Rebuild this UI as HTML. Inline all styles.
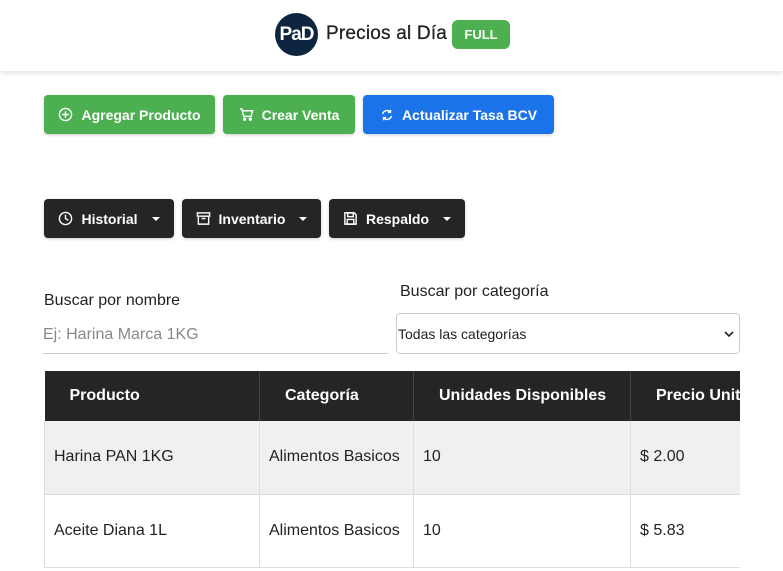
<!DOCTYPE html>
<html><head><meta charset="utf-8"><style>
*{box-sizing:border-box;margin:0;padding:0}
body{width:783px;height:563px;overflow:hidden;background:#fff;font-family:"Liberation Sans",sans-serif;position:relative;color:#222}
.hdr{position:absolute;left:0;top:0;width:783px;height:71px;background:#fff;box-shadow:0 2px 6px rgba(0,0,0,.12)}
.logo{position:absolute;left:275px;top:13px;width:43px;height:43px;border-radius:50%;background:#0e2540;color:#fff;font-weight:bold;font-size:19px;line-height:43px;text-align:center;letter-spacing:-1px}
.title{position:absolute;left:326px;top:23px;font-size:19px;color:#222;letter-spacing:.2px;-webkit-text-stroke:.3px #222}
.full{position:absolute;left:452px;top:20px;width:58px;height:29px;border-radius:6px;background:#4caf50;color:#fff;font-weight:bold;font-size:13px;line-height:29px;text-align:center}
.btn{position:absolute;height:39px;border-radius:4px;color:#fff;font-weight:bold;font-size:14px;display:flex;align-items:center;justify-content:center;gap:8px;box-shadow:0 1px 3px rgba(0,0,0,.2)}
.g{background:#4caf50}.b{background:#1a73e8}.d{background:#252525}
.caret{width:0;height:0;border-left:4px solid transparent;border-right:4px solid transparent;border-top:4px solid #fff;margin-left:6px}
.lbl{position:absolute;font-size:16px;color:#222}
.inp{position:absolute;left:43px;top:316px;width:345px;height:38px;border-bottom:1px solid #ccc;font-size:16px;color:#888;line-height:38px}
.sel{position:absolute;left:396px;top:313px;width:344px;height:41px;border:1px solid #ccc;border-radius:4px;font-size:14px;line-height:40px;padding-left:1px}
.wrap{position:absolute;left:44px;top:371px;width:696px;height:200px;overflow:hidden}
table{position:absolute;left:0;top:0;border-collapse:collapse;table-layout:fixed;width:720px}
th{background:#252525;color:#fff;height:50px;font-size:16px;text-align:left;border-right:1px solid #444}
td{height:73px;font-size:16px;border-right:1px solid #ddd;border-bottom:1px solid #ddd;padding-left:9px}
td:first-child{border-left:1px solid #ddd}
tr.r1 td{background:#f0f0f0}
</style></head><body>
<div class="hdr"><div class="logo">PaD</div><div class="title">Precios al Día</div><div class="full">FULL</div></div>
<div class="btn g" style="left:44px;top:95px;width:171px"><svg width="15" height="15" viewBox="0 0 16 16" fill="none" stroke="#fff" stroke-width="1.5"><circle cx="8" cy="8" r="6.5"/><path d="M8 4.5v7M4.5 8h7"/></svg>Agregar Producto</div>
<div class="btn g" style="left:223px;top:95px;width:132px"><svg width="15" height="15" viewBox="0 0 16 16" fill="none" stroke="#fff" stroke-width="1.5"><path d="M1 2h2l2 8h8l1.5-6H4"/><circle cx="6" cy="13" r="1"/><circle cx="12" cy="13" r="1"/></svg>Crear Venta</div>
<div class="btn b" style="left:363px;top:95px;width:191px"><svg width="14" height="14" viewBox="0 0 16 16" fill="none" stroke="#fff" stroke-width="1.6"><path d="M3 7a5 5 0 0 1 9-2M13 9a5 5 0 0 1-9 2"/><path d="M12 2v3h-3M4 14v-3h3"/></svg>Actualizar Tasa BCV</div>
<div class="btn d" style="left:44px;top:199px;width:130px"><svg width="15" height="15" viewBox="0 0 16 16" fill="none" stroke="#fff" stroke-width="1.5"><circle cx="8" cy="8" r="6.5"/><path d="M8 4v4l3 2"/></svg>Historial<span class="caret"></span></div>
<div class="btn d" style="left:182px;top:199px;width:139px"><svg width="15" height="15" viewBox="0 0 16 16" fill="none" stroke="#fff" stroke-width="1.5"><rect x="1.5" y="2" width="13" height="3.5"/><path d="M2.5 5.5V14h11V5.5M6 8h4"/></svg>Inventario<span class="caret"></span></div>
<div class="btn d" style="left:329px;top:199px;width:136px"><svg width="15" height="15" viewBox="0 0 16 16" fill="none" stroke="#fff" stroke-width="1.5"><path d="M2 2h10l2 2v10H2z"/><rect x="5" y="2" width="6" height="4"/><rect x="4.5" y="9" width="7" height="5"/></svg>Respaldo<span class="caret"></span></div>
<div class="lbl" style="left:44px;top:292px">Buscar por nombre</div>
<div class="lbl" style="left:400px;top:283px">Buscar por categoría</div>
<div class="inp">Ej: Harina Marca 1KG</div>
<div class="sel">Todas las categorías<svg style="position:absolute;right:4px;top:15px" width="12" height="10" viewBox="0 0 12 10" fill="none" stroke="#222" stroke-width="1.6"><path d="M2 3l4 4 4-4"/></svg></div>
<div class="wrap"><table>
<colgroup><col style="width:215px"><col style="width:154px"><col style="width:217px"><col style="width:134px"></colgroup>
<tr><th style="padding-left:25px">Producto</th><th style="padding-left:25px">Categoría</th><th style="padding-left:25px;white-space:nowrap">Unidades Disponibles</th><th style="padding-left:25px;white-space:nowrap">Precio Unitario</th></tr>
<tr class="r1"><td>Harina PAN 1KG</td><td style="white-space:nowrap">Alimentos Basicos</td><td>10</td><td>$ 2.00</td></tr>
<tr><td>Aceite Diana 1L</td><td style="white-space:nowrap">Alimentos Basicos</td><td>10</td><td>$ 5.83</td></tr>
</table></div>
</body></html>
